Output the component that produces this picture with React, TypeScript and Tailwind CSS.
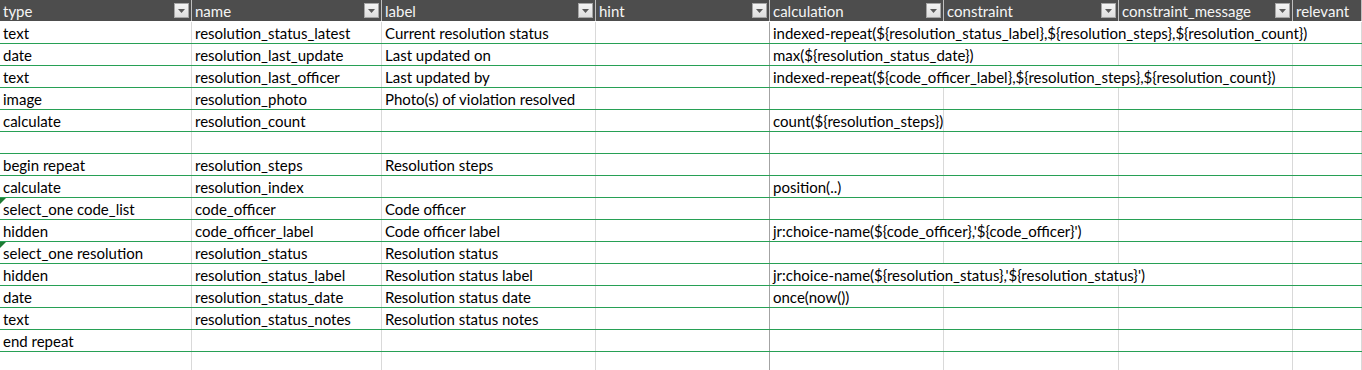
import React from 'react';

const widths = [192, 190, 214, 174, 174, 175, 174];
const headers = ['type', 'name', 'label', 'hint', 'calculation', 'constraint', 'constraint_message', 'relevant'];

type Row = { type?: string; name?: string; label?: string; calc?: string; span?: number; flag?: boolean };

const rows: Row[] = [
  { type: 'text', name: 'resolution_status_latest', label: 'Current resolution status', calc: 'indexed-repeat(${resolution_status_label},${resolution_steps},${resolution_count})', span: 4 },
  { type: 'date', name: 'resolution_last_update', label: 'Last updated on', calc: 'max(${resolution_status_date})', span: 2 },
  { type: 'text', name: 'resolution_last_officer', label: 'Last updated by', calc: 'indexed-repeat(${code_officer_label},${resolution_steps},${resolution_count})', span: 3 },
  { type: 'image', name: 'resolution_photo', label: 'Photo(s) of violation resolved' },
  { type: 'calculate', name: 'resolution_count', calc: 'count(${resolution_steps})', span: 1 },
  {},
  { type: 'begin repeat', name: 'resolution_steps', label: 'Resolution steps' },
  { type: 'calculate', name: 'resolution_index', calc: 'position(..)', span: 1 },
  { type: 'select_one code_list', name: 'code_officer', label: 'Code officer', flag: true },
  { type: 'hidden', name: 'code_officer_label', label: 'Code officer label', calc: "jr:choice-name(${code_officer},'${code_officer}')", span: 2 },
  { type: 'select_one resolution', name: 'resolution_status', label: 'Resolution status', flag: true },
  { type: 'hidden', name: 'resolution_status_label', label: 'Resolution status label', calc: "jr:choice-name(${resolution_status},'${resolution_status}')", span: 3 },
  { type: 'date', name: 'resolution_status_date', label: 'Resolution status date', calc: 'once(now())', span: 1 },
  { type: 'text', name: 'resolution_status_notes', label: 'Resolution status notes' },
  { type: 'end repeat' },
];

function FilterButton() {
  return (
    <div className="w-[15px] h-[15px] mr-[2px] shrink-0 border border-[#a5a5a5] bg-gradient-to-b from-[#f4f4f4] to-[#dedede] flex items-center justify-center">
      <svg width="7" height="4" viewBox="0 0 7 4">
        <path d="M0 0h7L3.5 4z" fill="#5a5a5a" />
      </svg>
    </div>
  );
}

function Cell({ w, text, dark, flag, grow }: { w?: number; text?: string; dark?: boolean; flag?: boolean; grow?: boolean }) {
  return (
    <div
      className={`relative h-full shrink-0 border-r ${dark ? 'border-[#a3a3a3]' : 'border-[#d9d9d9]'} ${grow ? 'flex-1' : ''} pl-[3px] pt-[1px] whitespace-nowrap`}
      style={grow ? undefined : { width: w }}
    >
      {flag && (
        <svg className="absolute left-0 top-0" width="6" height="6" viewBox="0 0 6 6">
          <path d="M0 0h6L0 6z" fill="#1e7b34" />
        </svg>
      )}
      {text}
    </div>
  );
}

export default function App() {
  return (
    <div className="w-[1362px] h-[370px] overflow-hidden bg-white font-['Lato',sans-serif] text-[15px] leading-[21px] text-black">
      {/* Header */}
      <div className="flex h-[22px] bg-[#4d4d4d] border-b border-white text-[#f5f5f5]">
        {headers.map((h, i) => (
          <div
            key={h}
            className={`flex items-center justify-between h-full pl-[3px] border-r border-[#bfbfbf] ${i === 7 ? 'flex-1' : 'shrink-0'}`}
            style={i < 7 ? { width: widths[i] } : undefined}
          >
            <span className="leading-[21px] pt-[1px]">{h}</span>
            {i < 7 && <FilterButton />}
          </div>
        ))}
      </div>

      {/* Body */}
      {rows.map((r, idx) => {
        const span = r.span ?? 0;
        const spanW = widths.slice(4, 4 + span).reduce((a, b) => a + b, 0);
        return (
          <div key={idx} className="flex h-[22px] border-b border-[#27a055]">
            <Cell w={widths[0]} text={r.type} flag={r.flag} />
            <Cell w={widths[1]} text={r.name} />
            <Cell w={widths[2]} text={r.label} />
            <Cell w={widths[3]} dark />
            {span === 4 ? (
              <Cell grow text={r.calc} />
            ) : span > 0 ? (
              <>
                <Cell w={spanW} text={r.calc} />
                {widths.slice(4 + span).map((w, j) => (
                  <Cell key={j} w={w} />
                ))}
                <Cell grow />
              </>
            ) : (
              <>
                <Cell w={widths[4]} />
                <Cell w={widths[5]} />
                <Cell w={widths[6]} />
                <Cell grow />
              </>
            )}
          </div>
        );
      })}
      <div className="flex h-[22px]">
        <Cell w={widths[0]} />
        <Cell w={widths[1]} />
        <Cell w={widths[2]} />
        <Cell w={widths[3]} dark />
        <Cell w={widths[4]} />
        <Cell w={widths[5]} />
        <Cell w={widths[6]} />
        <Cell grow />
      </div>
    </div>
  );
}
